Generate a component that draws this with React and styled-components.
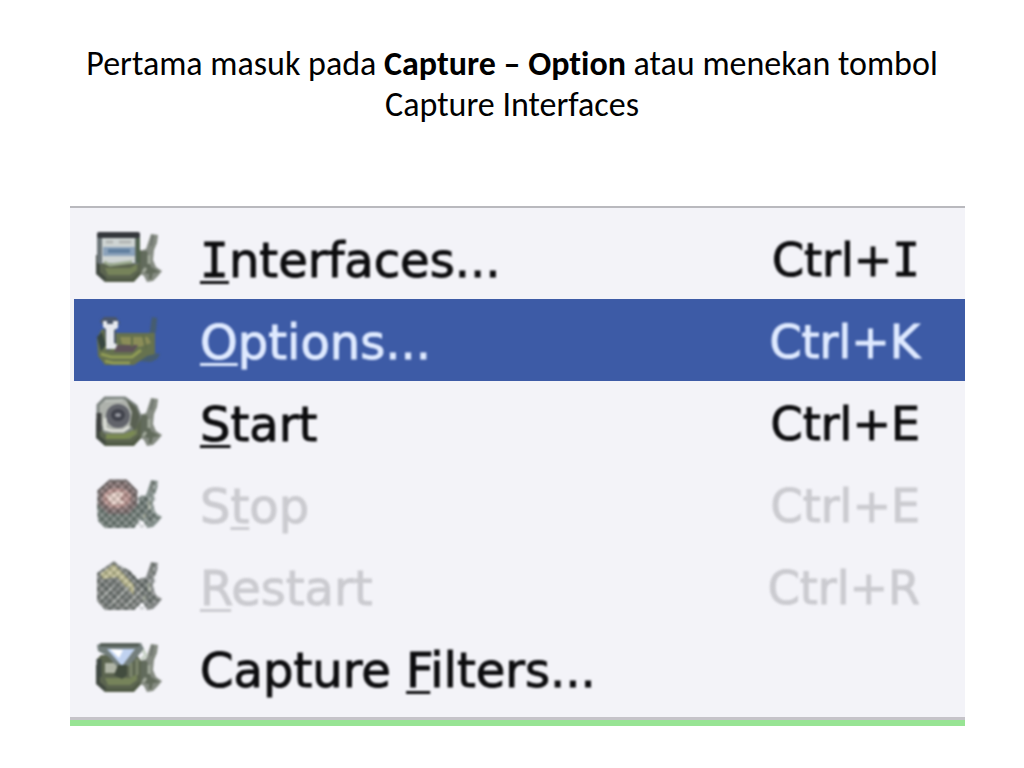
import React from "react";
import styled, { createGlobalStyle, css } from "styled-components";

const GlobalStyle = createGlobalStyle`
  * { box-sizing: border-box; }
  body { margin: 0; background: #fff; }
`;

const Slide = styled.main`
  padding: 43px 59px 42px 70px;
`;

const Title = styled.h1`
  margin: 0 0 81px;
  padding-right: 11px;
  font-family: Calibri, Carlito, Lato, sans-serif;
  font-size: 34px;
  font-weight: 400;
  font-variant-ligatures: none;
  line-height: 41px;
  text-align: center;
  color: #000;
`;

const Menu = styled.ul`
  list-style: none;
  margin: 0;
  padding: 9px 0 11px;
  background: #f3f3f8;
  border-top: 2px solid #b9b9be;
  border-bottom: 6px solid #98e494;
  box-shadow: inset 0 -3px 0 #c5c3c9;
`;

const tones = {
  normal: css`color: #0c0c0e; background: transparent;`,
  selected: css`color: #dfeaff; background: #3d5ba6;`,
  disabled: css`color: #cbcbd0; background: transparent;`,
};

const Item = styled.button`
  display: flex;
  align-items: center;
  width: calc(100% - 4px);
  height: 82px;
  margin: 0 0 0 4px;
  padding: 0 45px 0 22px;
  border: 0;
  font-family: Verdana, "DejaVu Sans", sans-serif;
  line-height: 56px;
  text-align: left;
  -webkit-text-stroke: 1px currentColor;
  ${(p) => tones[p.$tone]}
`;

const Icon = styled.svg`
  flex: none;
  width: 66px;
  height: 54px;
  margin-right: 38px;
  filter: blur(1px);
`;

const Label = styled.span`
  flex: 1;
  padding-top: 4px;
  font-size: 48px;
  white-space: pre;
  filter: blur(1px);
`;

const Shortcut = styled.span`
  padding-top: 4px;
  font-size: 46px;
  white-space: pre;
  filter: blur(1px);
`;

const Accelerator = styled.u`
  text-decoration-thickness: 3px;
  text-underline-offset: 4px;
  text-decoration-skip-ink: none;
`;

const SlabI = styled.span`
  font-family: "DejaVu Sans Mono", monospace;
`;

function Wing({ light = "#858b82", dark = "#626b5c" }) {
  return (
    <g>
      <path d="M55 3 L62 4 L61 12 L58 19 L57 29 L60 36 L66 40 L62 45 L57 50 L51 51 L48 45 L43 42 L43 20 L50 18 Z" fill={light} />
      <path d="M43 20 L51 20 L55 36 L64 41 L52 43 L43 40 Z" fill={dark} />
      <path d="M47 21 V30 M56 38 L54 48" stroke={dark} strokeWidth="3" fill="none" />
      <path d="M53 24 V33 M50 37 L47 41" stroke="#a2a99b" strokeWidth="3" fill="none" />
      <path d="M57 4 L55 15" stroke="#6f7670" strokeWidth="2" fill="none" />
    </g>
  );
}

function Body() {
  return (
    <g>
      <path d="M1 18 L5 14 H41 L45 20 V43 L38 51 H9 L2 44 Z" fill="#5c6550" />
      <path d="M2 24 V42 L10 49" stroke="#414940" strokeWidth="4" fill="none" />
      <path d="M9 37 H34 L41 33 L41 39 L34 44 H12 Z" fill="#76835a" />
      <path d="M9 49 H37 L44 42" stroke="#4f5944" strokeWidth="3" fill="none" />
    </g>
  );
}

function Mesh({ id, shape }) {
  return (
    <g>
      <defs>
        <pattern id={id} width="8" height="8" patternUnits="userSpaceOnUse">
          <rect width="4" height="4" fill="#fff" fillOpacity=".2" />
          <rect x="4" y="4" width="4" height="4" fill="#fff" fillOpacity=".2" />
          <rect x="4" width="4" height="4" fill="#36403c" fillOpacity=".2" />
          <rect y="4" width="4" height="4" fill="#36403c" fillOpacity=".2" />
        </pattern>
      </defs>
      <path d={shape} fill={`url(#${id})`} />
    </g>
  );
}

const drawings = {
  interfaces: (
    <>
      <Wing />
      <Body />
      <rect x="1" y="2" width="43" height="31" rx="3" fill="#6d7679" />
      <rect x="6" y="7" width="33" height="25" fill="#ced4d3" />
      <rect x="1" y="1" width="43" height="6" rx="2" fill="#34373b" />
      <rect x="7" y="16" width="32" height="9" fill="#8ba2ba" />
      <path d="M12 20 H34" stroke="#607f9f" strokeWidth="4" />
      <path d="M10 11 H17 M23 11 H35" stroke="#b2b5b4" strokeWidth="3" />
      <path d="M8 31 L14 34 L36 31" stroke="#9baa8f" strokeWidth="3" fill="none" />
      <path d="M42 7 V32" stroke="#50624e" strokeWidth="4" />
    </>
  ),
  options: (
    <>
      <path d="M56 4 L61 5 L60 18 L57 23 L58 40 L64 41 L61 46 L55 49 L43 48 L40 25 L53 24 Z" fill="#465d70" />
      <path d="M1 25 L6 16 L16 20 L27 20 H59 V41 L51 43 L38 52 H9 L2 43 Z" fill="#66724f" />
      <path d="M4 8 L8 4 H20 L24 10 L20 14 V34 L11 38 L8 14 Z" fill="#4b576a" />
      <path d="M1 24 L6 19 L10 32 L5 38 Z" fill="#374640" />
      <path d="M7 8 H11 V11 H17 V8 H22 V15 L18 17 V30 L22 32 V36 H10 V16 L7 14 Z" fill="#e6e9ee" />
      <path d="M24 24 H52 L55 30 L44 34 L26 31 Z" fill="#8b8d58" />
      <path d="M21 32 H42 L37 39 H18 Z" fill="#5f5359" />
      <path d="M5 41 L15 44 H36 L45 37 M9 48 L17 50 H34" stroke="#909b55" strokeWidth="3" fill="none" />
      <path d="M36 24 V34 M47 22 L50 36" stroke="#616d49" strokeWidth="2" />
    </>
  ),
  start: (
    <>
      <Wing />
      <Body />
      <path d="M2 10 L9 3 H29 L40 11 L44 21 L38 33 L28 37 H9 L2 28 Z" fill="#aeb2ac" stroke="#7d8480" strokeWidth="3" />
      <path d="M30 4 L40 12 L44 22 L39 36 L34 30 L36 17 Z" fill="#596052" />
      <path d="M3 18 V36" stroke="#3e403f" strokeWidth="5" />
      <circle cx="22" cy="21" r="12" fill="#62646b" />
      <ellipse cx="22" cy="20" rx="5" ry="4" fill="#94969e" stroke="#41434c" strokeWidth="4" />
      <path d="M9 23 V34 L16 36 H27 L33 32" stroke="#dddfd8" strokeWidth="3" fill="none" />
      <path d="M9 6 L27 5" stroke="#c0c5bf" strokeWidth="2" />
      <path d="M10 42 H28 L38 37" stroke="#7b8b52" strokeWidth="4" fill="none" />
    </>
  ),
  stop: (
    <>
      <Wing light="#87928f" dark="#65716d" />
      <path d="M1 26 H44 V42 L38 51 H9 L2 44 Z" fill="#6a7671" />
      <path d="M14 4 H30 L40 14 V28 L32 36 H13 L3 27 V14 Z" fill="#806a6a" stroke="#6b6262" strokeWidth="3" />
      <ellipse cx="21" cy="21" rx="14" ry="10" fill="#b48b87" />
      <path d="M10 19 L19 15 H28 L24 22 L30 26 L16 28 Z" fill="#e4cbc2" />
      <Mesh id="stop-mesh" shape="M14 3 H30 L42 17 L54 20 L56 3 L62 5 L58 34 L65 40 L52 50 L39 51 H9 L1 42 V14 Z" />
    </>
  ),
  restart: (
    <>
      <Wing light="#858888" dark="#686e6b" />
      <path d="M1 14 L18 2 L25 8 L33 11 L46 25 V43 L38 51 H9 L1 42 Z" fill="#747875" />
      <path d="M4 15 L18 5 L25 12 L38 26 L38 36 L29 27 L21 18 L7 20 Z" fill="#bbb88c" />
      <path d="M6 24 L22 40 M14 22 L34 43 M5 36 L18 49 M32 13 L52 33" stroke="#5e6463" strokeWidth="2" />
      <path d="M5 40 L18 27 M15 46 L33 28 M30 47 L47 30" stroke="#999d9a" strokeWidth="2" />
      <Mesh id="restart-mesh" shape="M1 14 L18 2 L33 11 L47 20 L54 17 L56 3 L62 5 L58 34 L65 40 L52 50 L38 51 H9 L1 42 Z" />
    </>
  ),
  filters: (
    <>
      <Wing />
      <Body />
      <path d="M1 4 L6 2 H45 L48 8 L33 25 H20 L13 16 L2 10 Z" fill="#747f7d" />
      <path d="M4 4 H43" stroke="#505951" strokeWidth="3" />
      <path d="M11 8 H39 L26 25 Z" fill="#c0d2f0" />
      <path d="M14 8 L27 9 L23 17 Z" fill="#fff" />
      <path d="M3 18 V36" stroke="#3f4842" strokeWidth="5" />
      <path d="M9 22 H18 L23 28 L20 32 H9 Z" fill="#b0b5a6" />
      <path d="M22 24 H31 V34 L26 38 L18 34 Z" fill="#424c3e" />
      <path d="M35 22 V36 M41 18 V34" stroke="#7d876e" strokeWidth="3" />
      <path d="M47 9 L50 15 L45 18" stroke="#c6d1c4" strokeWidth="3" fill="none" />
    </>
  ),
};

const items = [
  { icon: "interfaces", label: [<Accelerator key="a"><SlabI>I</SlabI></Accelerator>, "nterfaces..."], keys: ["Ctrl+", <SlabI key="i">I</SlabI>], tone: "normal" },
  { icon: "options", label: [<Accelerator key="a">O</Accelerator>, "ptions..."], keys: "Ctrl+K", tone: "selected" },
  { icon: "start", label: [<Accelerator key="a">S</Accelerator>, "tart"], keys: "Ctrl+E", tone: "normal" },
  { icon: "stop", label: ["S", <Accelerator key="a">t</Accelerator>, "op"], keys: "Ctrl+E", tone: "disabled" },
  { icon: "restart", label: [<Accelerator key="a">R</Accelerator>, "estart"], keys: "Ctrl+R", tone: "disabled" },
  { icon: "filters", label: ["Capture ", <Accelerator key="a">F</Accelerator>, "ilters..."], keys: null, tone: "normal" },
];

export default function App() {
  return (
    <>
      <GlobalStyle />
      <Slide>
        <Title>
          Pertama masuk pada <b>Capture – Option</b> atau menekan tombol Capture Interfaces
        </Title>
        <Menu>
          {items.map((item) => (
            <li key={item.icon}>
              <Item type="button" $tone={item.tone} disabled={item.tone === "disabled"}>
                <Icon viewBox="0 0 66 54" aria-hidden="true">{drawings[item.icon]}</Icon>
                <Label>{item.label}</Label>
                {item.keys && <Shortcut>{item.keys}</Shortcut>}
              </Item>
            </li>
          ))}
        </Menu>
      </Slide>
    </>
  );
}
